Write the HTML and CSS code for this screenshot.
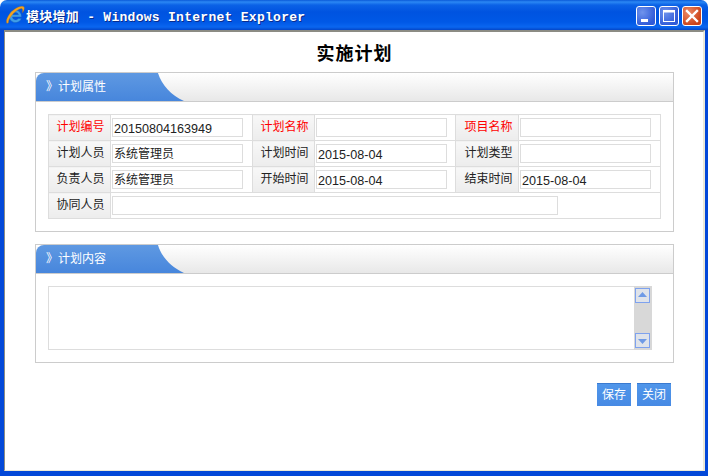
FILE: index.html
```html
<!DOCTYPE html>
<html lang="zh-CN">
<head>
<meta charset="utf-8">
<title>模块增加</title>
<link rel="stylesheet" href="styles.css">
</head>
<body>
<div class="window">
  <header class="titlebar">
    <svg class="ie-icon" width="20" height="20" viewBox="0 0 20 20">
      <path d="M10.500 5a6.300 6.300 0 1 0 5.900 8.500h-3.200a3.200 3.200 0 0 1-5.800-1.600h9.100A6.300 6.300 0 0 0 10.500 5zM7.500 9.700a3 3 0 0 1 3-2.200 3 3 0 0 1 3 2.200z" fill="#3f9ee8" stroke="#1f5fb0" stroke-width=".4"/>
      <path d="M2 18.500C-.2 15.500 4.500 7.500 9.500 4.200 13 1.800 17.800 .4 19 2c.8 1.200 0 3.500-1.500 5.800.2-1.800.3-3.400-.4-4-1.300-1.200-5.400 1.400-8.800 4.700C4.800 12.300 3 15.800 3.600 17.400z" fill="#f4a41e" stroke="#b56a10" stroke-width=".3"/>
    </svg>
    <span class="title-text">模块增加 - Windows Internet Explorer</span>
    <div class="controls">
      <button class="ctl ctl-blue" type="button" aria-label="最小化"><svg width="18" height="18" viewBox="0 0 18 18"><rect x="4" y="12" width="7" height="3" fill="#fff"/></svg></button>
      <button class="ctl ctl-blue" type="button" aria-label="最大化"><svg width="18" height="18" viewBox="0 0 18 18"><rect x="3.500" y="3.500" width="11" height="11" fill="none" stroke="#fff"/><rect x="3" y="3" width="12" height="2.500" fill="#fff"/></svg></button>
      <button class="ctl ctl-red" type="button" aria-label="关闭"><svg width="18" height="18" viewBox="0 0 18 18"><path d="M4 4l10 10M14 4L4 14" stroke="#fff" stroke-width="2.400" stroke-linecap="square"/></svg></button>
    </div>
  </header>
  <div class="frame">
    <main class="client">
      <h1 class="page-title">实施计划</h1>

      <section class="panel">
        <div class="panel-head">
          <h2 class="tab">》计划属性</h2>
          <svg class="tab-curve" width="27" height="28" viewBox="0 0 28 29" preserveAspectRatio="none">
            <defs><linearGradient id="tabA" x1="0" y1="0" x2="0" y2="1"><stop offset="0" stop-color="#5f99e2"/><stop offset="1" stop-color="#4786dc"/></linearGradient></defs>
            <path d="M0 0H1C5 13 15 23 28 29H0Z" fill="url(#tabA)"/>
          </svg>
        </div>
        <div class="panel-body">
          <table class="form">
            <colgroup><col class="c-l1"><col class="c-i1"><col class="c-l2"><col class="c-i2"><col class="c-l3"><col class="c-i3"></colgroup>
            <tr>
              <th class="req">计划编号</th><td><input class="num" value="20150804163949"></td>
              <th class="req">计划名称</th><td><input></td>
              <th class="req">项目名称</th><td><input></td>
            </tr>
            <tr>
              <th>计划人员</th><td><input value="系统管理员"></td>
              <th>计划时间</th><td><input class="num" value="2015-08-04"></td>
              <th>计划类型</th><td><input></td>
            </tr>
            <tr>
              <th>负责人员</th><td><input value="系统管理员"></td>
              <th>开始时间</th><td><input class="num" value="2015-08-04"></td>
              <th>结束时间</th><td><input class="num" value="2015-08-04"></td>
            </tr>
            <tr>
              <th>协同人员</th><td colspan="5"><input class="wide"></td>
            </tr>
          </table>
        </div>
      </section>

      <section class="panel panel-second">
        <div class="panel-head">
          <h2 class="tab">》计划内容</h2>
          <svg class="tab-curve" width="27" height="28" viewBox="0 0 28 29" preserveAspectRatio="none">
            <path d="M0 0H1C5 13 15 23 28 29H0Z" fill="url(#tabA)"/>
          </svg>
        </div>
        <div class="panel-body">
          <div class="memo">
            <div class="memo-text"></div>
            <div class="scrollbar">
              <span class="sb-btn"><svg width="15" height="15" viewBox="0 0 15 15"><path d="M7.500 4L12 9H3z" fill="#6e9ae6"/></svg></span>
              <span class="sb-btn"><svg width="15" height="15" viewBox="0 0 15 15"><path d="M7.500 11L12 6H3z" fill="#6e9ae6"/></svg></span>
            </div>
          </div>
        </div>
      </section>

      <div class="actions">
        <button class="btn" type="button">保存</button>
        <button class="btn" type="button">关闭</button>
      </div>
    </main>
  </div>
</div>
</body>
</html>
```

FILE: styles.css
```css
* { box-sizing: border-box; }
html, body { margin: 0; padding: 0; background: #fff; }
body { font-family: "Liberation Sans", "Noto Sans CJK SC", sans-serif; font-size: 12px; color: #222; }

.window { width: 708px; height: 476px; display: flex; flex-direction: column; overflow: hidden; }

.titlebar {
  height: 30px; flex: none; display: flex; align-items: center; padding: 0 6px 0 5px;
  border-radius: 7px 7px 0 0;
  background: linear-gradient(#0a5ad8 0, #2b88f4 2px, #0b62e6 5px, #0053e0 12px, #0058e6 22px, #0a66f0 27px, #0346c8 30px);
}
.ie-icon { flex: none; }
.title-text {
  margin-left: 1px; color: #fff; font-family: "Liberation Mono", "Noto Sans CJK SC", monospace;
  font-weight: bold; font-size: 13px; letter-spacing: .28px; text-shadow: 1px 1px 0 #0a2c8c; white-space: pre;
}
.controls { margin-left: auto; display: flex; gap: 3px; padding-top: 2px; }
.ctl {
  width: 20px; height: 20px; padding: 0; display: flex; align-items: center; justify-content: center;
  border: 1px solid #fff; border-radius: 3px;
}
.ctl svg { display: block; }
.ctl-blue { background: radial-gradient(circle at 30% 30%, #6f93ec, #2f5ad8 75%); }
.ctl-red { background: radial-gradient(circle at 30% 30%, #ec8a66, #cc4218 75%); }

.frame { flex: 1; min-height: 0; display: flex; background: #0348d8; padding: 0 4px 5px; }
.client {
  flex: 1; background: #fff; padding: 0 29px 0 30px;
  border-top: 2px solid #8c8c84; border-left: 1px solid #8c8c84;
  border-right: 2px solid #ece9d8; border-bottom: 1px solid #ece9d8;
}

.page-title {
  margin: 0; height: 40px; line-height: 40px; text-align: center;
  font-family: "Noto Sans CJK SC", sans-serif; font-size: 18px; font-weight: bold; color: #000; letter-spacing: 1px;
}

.panel { border: 1px solid #ccc; }
.panel-second { margin-top: 12px; }
.panel-head {
  height: 29px; display: flex; border-bottom: 1px solid #ccc;
  background: linear-gradient(#fff, #e8e8e8);
}
.tab {
  margin: 0; width: 121px; padding-left: 10px; line-height: 26px; border-radius: 8px 0 0 0;
  font-size: 12px; font-weight: normal; color: #fff; font-family: "Noto Sans CJK SC", sans-serif;
  background: linear-gradient(#5f99e2, #4786dc);
}
.tab-curve { display: block; flex: none; }
.panel-body { padding: 12px; }

.form { width: 612px; table-layout: fixed; border-collapse: collapse; }
.c-l1, .c-l2 { width: 62px; }
.c-l3 { width: 63px; }
.c-i1, .c-i3 { width: 142px; }
.c-i2 { width: 141px; }
.form th, .form td { height: 26px; padding: 0; border: 1px solid #ddd; }
.form th {
  font-weight: normal; font-size: 12px; color: #222; text-align: center; padding: 0 0 5px 2px;
  font-family: "Noto Sans CJK SC", sans-serif;
  background: linear-gradient(#f8f8f8, #ececec);
}
.form th:nth-child(5) { padding-left: 3px; }
.form th.req { color: #f00; }
.form td { padding: 0 0 0 1px; vertical-align: middle; }
.form input {
  display: block; width: 131px; height: 19px; margin: 0; padding: 0 1px 3px;
  border: 1px solid #ddd; background: #fff; outline: none;
  font-family: "Noto Sans CJK SC", sans-serif; font-size: 12px; line-height: 12px; color: #222;
}
.form input.num { padding: 2px 1px 0; font-family: "Liberation Sans", sans-serif; font-size: 12.6px; line-height: normal; }
.form input.wide { width: 446px; }

.memo { width: 604px; height: 64px; display: flex; border: 1px solid #ddd; border-right: 0; }
.memo-text { flex: 1; }
.scrollbar {
  width: 18px; margin: -1px 0; padding: 2px 1px; background: #d8d8d8;
  display: flex; flex-direction: column; justify-content: space-between;
}
.sb-btn { display: block; width: 15px; height: 15px; background: #dfe3ea; border: 1px solid #7ea2ee; }
.sb-btn svg { display: block; margin: -1px; }

.actions { display: flex; justify-content: flex-end; gap: 6px; margin-top: 20px; padding-right: 3px; }
.btn {
  width: 34px; height: 23px; padding: 0 0 4px; border: 0; border-top: 1px solid #3a7ad0;
  background: linear-gradient(#5096ea, #478ae4); color: #fff; cursor: pointer;
  font-family: "Noto Sans CJK SC", sans-serif; font-size: 12px;
}
```
